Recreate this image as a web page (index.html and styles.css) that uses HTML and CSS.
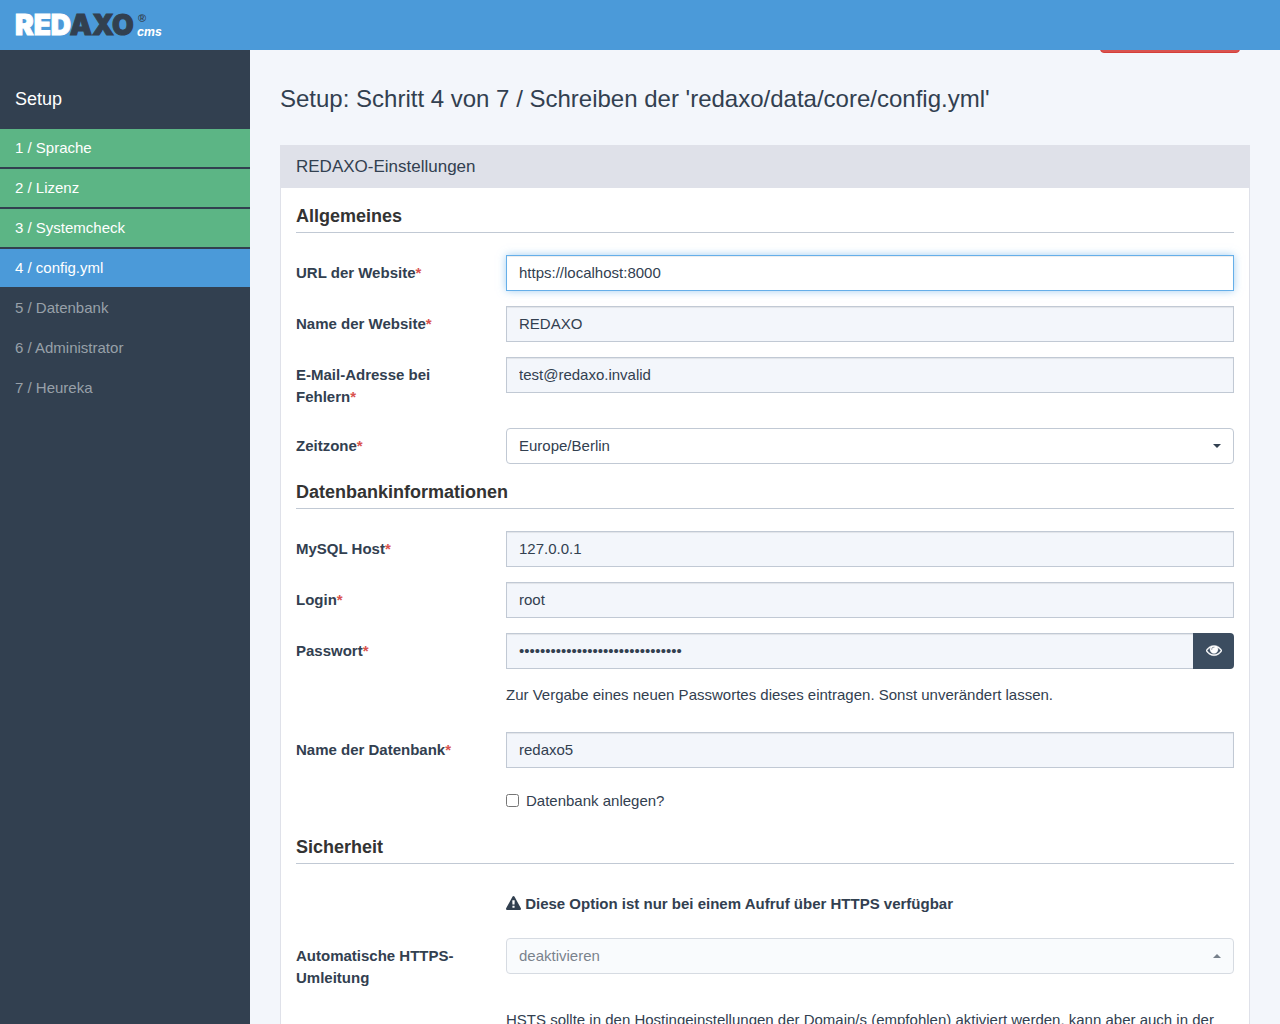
FILE: index.html
```html
<!DOCTYPE html>
<html lang="de">
<head>
<meta charset="utf-8">
<meta name="viewport" content="width=device-width, initial-scale=1">
<title>Setup</title>
<link rel="stylesheet" href="styles.css">
</head>
<body>
<header class="topbar">
  <svg class="logo" width="150" height="30" viewBox="0 0 150 30" role="img">
    <text class="logo-word" x="0" y="25"><tspan class="logo-light">RED</tspan><tspan class="logo-dark">AXO</tspan></text>
    <text class="logo-reg" x="123" y="12">®</text>
    <text class="logo-cms" x="122" y="26">cms</text>
  </svg>
</header>
<div class="alert-tab"></div>
<div class="layout">
  <nav class="sidebar">
    <h2 class="sidebar-title">Setup</h2>
    <ul class="steps">
      <li><a class="step step-done" href="#">1 / Sprache</a></li>
      <li><a class="step step-done" href="#">2 / Lizenz</a></li>
      <li><a class="step step-done" href="#">3 / Systemcheck</a></li>
      <li><a class="step step-active" href="#">4 / config.yml</a></li>
      <li><span class="step">5 / Datenbank</span></li>
      <li><span class="step">6 / Administrator</span></li>
      <li><span class="step">7 / Heureka</span></li>
    </ul>
  </nav>
  <main class="content">
    <h1 class="page-title">Setup: Schritt 4 von 7 / Schreiben der 'redaxo/data/core/config.yml'</h1>
    <section class="panel">
      <header class="panel-header">REDAXO-Einstellungen</header>
      <form class="panel-body">
        <h3 class="group-title">Allgemeines</h3>
        <div class="row">
          <label class="label" for="url">URL der Website<span class="required">*</span></label>
          <input class="control" id="url" type="text" value="https://localhost:8000" autofocus>
        </div>
        <div class="row">
          <label class="label" for="name">Name der Website<span class="required">*</span></label>
          <input class="control" id="name" type="text" value="REDAXO">
        </div>
        <div class="row">
          <label class="label" for="email">E-Mail-Adresse bei Fehlern<span class="required">*</span></label>
          <input class="control" id="email" type="email" value="test@redaxo.invalid">
        </div>
        <div class="row">
          <label class="label" for="timezone">Zeitzone<span class="required">*</span></label>
          <div class="select">
            <select class="control" id="timezone"><option>Europe/Berlin</option></select>
          </div>
        </div>

        <h3 class="group-title">Datenbankinformationen</h3>
        <div class="row">
          <label class="label" for="host">MySQL Host<span class="required">*</span></label>
          <input class="control" id="host" type="text" value="127.0.0.1">
        </div>
        <div class="row">
          <label class="label" for="login">Login<span class="required">*</span></label>
          <input class="control" id="login" type="text" value="root">
        </div>
        <div class="row">
          <label class="label" for="password">Passwort<span class="required">*</span></label>
          <div class="field">
            <div class="input-group">
              <input class="control" id="password" type="password" value="aaaaaaaaaaaaaaaaaaaaaaaaaaaaaaa">
              <button class="reveal" type="button">
                <svg width="16" height="16" viewBox="0 0 1792 1792"><path fill="currentColor" stroke="currentColor" stroke-width="40" d="M1664 960q-152-236-381-353 61 104 61 225 0 185-131.500 316.500t-316.500 131.500-316.500-131.500-131.500-316.500q0-121 61-225-229 117-381 353 133 205 333.500 326.500t434.500 121.500 434.500-121.500 333.500-326.500zm-720-384q0-20-14-34t-34-14q-125 0-214.500 89.500t-89.500 214.500q0 20 14 34t34 14 34-14 14-34q0-86 61-147t147-61q20 0 34-14t14-34zm848 384q0 34-20 69-140 230-376.500 368.500t-499.500 138.500-499.500-139-376.500-368q-20-35-20-69t20-69q140-229 376.500-368t499.500-139 499.500 139 376.500 368q20 35 20 69z"/></svg>
              </button>
            </div>
            <p class="help">Zur Vergabe eines neuen Passwortes dieses eintragen. Sonst unverändert lassen.</p>
          </div>
        </div>
        <div class="row">
          <label class="label" for="dbname">Name der Datenbank<span class="required">*</span></label>
          <input class="control" id="dbname" type="text" value="redaxo5">
        </div>
        <div class="row">
          <label class="check"><input class="checkbox" type="checkbox">Datenbank anlegen?</label>
        </div>

        <h3 class="group-title">Sicherheit</h3>
        <div class="row">
          <p class="notice">
            <svg class="notice-icon" width="15" height="15" viewBox="0 0 1792 1792"><path fill="currentColor" d="M1024 1375v-190q0-14-9.500-23.500t-22.500-9.500h-192q-13 0-22.500 9.500t-9.500 23.500v190q0 14 9.500 23.500t22.500 9.500h192q13 0 22.500-9.500t9.500-23.500zm-2-374l18-459q0-12-10-19-13-11-24-11h-220q-11 0-24 11-10 7-10 21l17 457q0 10 10 16.500t24 6.500h185q14 0 23.500-6.500t10.500-16.500zm-14-934l768 1408q35 63-2 126-17 29-46.500 46t-63.500 17h-1536q-34 0-63.500-17t-46.500-46q-37-63-2-126l768-1408q17-31 47-49t65-18 65 18 47 49z"/></svg>
            Diese Option ist nur bei einem Aufruf über HTTPS verfügbar
          </p>
        </div>
        <div class="row">
          <label class="label" for="https">Automatische HTTPS-Umleitung</label>
          <div class="select select-up">
            <select class="control" id="https" disabled><option>deaktivieren</option></select>
          </div>
        </div>
        <div class="row">
          <p class="text">HSTS sollte in den Hostingeinstellungen der Domain/s (empfohlen) aktiviert werden, kann aber auch in der</p>
        </div>
      </form>
    </section>
  </main>
</div>
</body>
</html>
```
FILE: styles.css
```css
* { box-sizing: border-box; }

body {
  margin: 0;
  background: #f3f6fb;
  color: #324050;
  font: 15px/22px "Liberation Sans", Arial, sans-serif;
}

h1, h2, h3, p, ul { margin: 0; padding: 0; }

.topbar {
  position: sticky;
  top: 0;
  z-index: 2;
  display: flex;
  align-items: center;
  height: 50px;
  padding: 0 15px;
  background: #4b9ad9;
}

.logo { display: block; overflow: visible; }
.logo-word { font: 900 28px Inter, sans-serif; stroke-width: 1px; }
.logo-light { fill: #fff; stroke: #fff; }
.logo-dark { fill: #324050; stroke: #324050; }
.logo-reg { font: bold 11px "Liberation Sans", sans-serif; fill: #324050; }
.logo-cms { font: italic bold 12px Inter, sans-serif; fill: #fff; }

/* red tab that hangs out from under the top bar */
.alert-tab {
  position: fixed;
  top: 17px;
  right: 40px;
  z-index: 1;
  width: 140px;
  height: 36px;
  border: 1px solid #d43f3a;
  border-radius: 4px;
  background: #d9534f;
}

.layout {
  display: grid;
  grid-template-columns: 250px minmax(0, 1fr);
  min-height: calc(100vh - 50px);
}

.sidebar {
  padding-top: 36px;
  background: #324050;
}

.sidebar-title {
  padding: 0 15px;
  margin-bottom: 17px;
  color: #fff;
  font-size: 18px;
  font-weight: normal;
  line-height: 26px;
}

.steps {
  display: flex;
  flex-direction: column;
  gap: 2px;
  list-style: none;
}

.step {
  display: block;
  padding: 8px 15px;
  color: #98a0a9;
  text-decoration: none;
}
.step-done { background: #5cb585; color: #fff; }
.step-active { background: #4b9ad9; color: #fff; }

.content { padding: 36px 30px 0; }

.page-title {
  margin-bottom: 33px;
  font-size: 24px;
  font-weight: normal;
  line-height: 26px;
}

.panel {
  border: 1px solid #dfe1e9;
  border-bottom: 0;
  background: #fff;
}

.panel-header {
  padding: 10px 15px;
  background: #dfe1e9;
  font-size: 17px;
}

.panel-body {
  display: flex;
  flex-direction: column;
  gap: 15px;
  padding: 15px 15px 0;
}

.group-title {
  margin-bottom: 7px;
  padding-bottom: 3px;
  border-bottom: 1px solid #c1c9d4;
  color: #333;
  font-size: 18px;
  line-height: 26px;
}

.row {
  display: grid;
  grid-template-columns: 180px minmax(0, 1fr);
  column-gap: 30px;
  align-items: start;
}
.row > :only-child { grid-column: 2; }

.label {
  padding: 7px 0 5px;
  font-weight: bold;
}
.required { color: #d9534f; }

.control {
  display: block;
  width: 100%;
  height: 36px;
  margin: 0;
  padding: 5px 12px 7px;
  border: 1px solid #c1c9d4;
  border-radius: 0;
  background: #f3f6fb;
  box-shadow: inset 0 1px 1px rgba(0, 0, 0, 0.075);
  color: #324050;
  font: inherit;
}
.control:focus {
  border-color: #66afe9;
  outline: 0;
  background: #fff;
  box-shadow: inset 0 1px 1px rgba(0, 0, 0, 0.075), 0 0 8px rgba(102, 175, 233, 0.6);
}

.select { position: relative; }
.select .control {
  appearance: none;
  padding: 6px 12px;
  border-radius: 4px;
  background: #fff;
  box-shadow: none;
}
.select .control:disabled {
  background: #f7f9fc;
  opacity: 0.65;
}
.select::after {
  content: "";
  position: absolute;
  top: 16px;
  right: 13px;
  border: 4px solid transparent;
  border-top-color: #324050;
  border-bottom: 0;
  pointer-events: none;
}
.select-up::after {
  border-top: 0;
  border-bottom: 4px solid #77808b;
}

.input-group { display: flex; }
.input-group .control {
  flex: 1;
  border-right: 0;
}

.reveal {
  display: flex;
  align-items: center;
  justify-content: center;
  width: 41px;
  height: 36px;
  padding: 0 0 2px;
  border: 0;
  border-radius: 0 4px 4px 0;
  background: #3c4d60;
  color: #fff;
}

.help { margin: 15px 0 11px; }

.check {
  display: flex;
  align-items: flex-start;
  gap: 7px;
  padding: 7px 0;
}
.checkbox {
  width: 13px;
  height: 13px;
  margin: 4px 0 0;
}

.notice {
  padding: 7px 0 8px;
  font-weight: bold;
}
.notice-icon { vertical-align: -2px; }
```
